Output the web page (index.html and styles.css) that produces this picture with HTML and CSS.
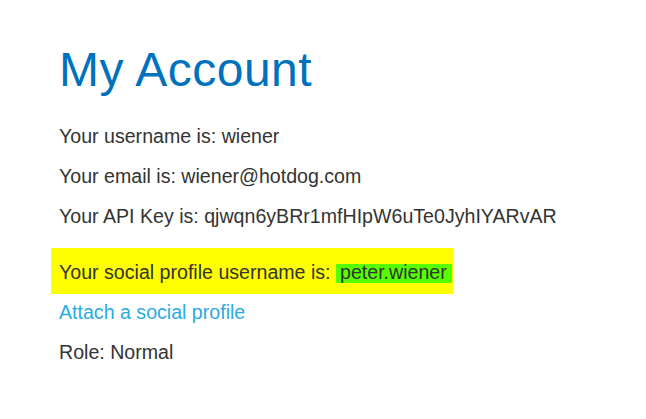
FILE: index.html
```html
<!DOCTYPE html>
<html>
<head>
<meta charset="utf-8">
<link rel="stylesheet" href="styles.css">
</head>
<body>
<div class="container">
  <h1 class="title">My Account</h1>
  <div class="account">
    <p class="line">Your username is: wiener</p>
    <p class="line">Your email is: wiener@hotdog.com</p>
    <p class="line">Your API Key is: qjwqn6yBRr1mfHIpW6uTe0JyhIYARvAR</p>
    <div class="social">
      <p class="line">Your social profile username is: <span class="badge">peter.wiener</span></p>
    </div>
    <p class="line link-line"><a class="link" href="#">Attach a social profile</a></p>
    <p class="line">Role: Normal</p>
  </div>
</div>
</body>
</html>
```
FILE: styles.css
```css
html, body {
  margin: 0;
  padding: 0;
  background: #ffffff;
}
body {
  font-family: "Liberation Sans", Arial, sans-serif;
  color: #333332;
  font-size: 19.6px;
}
.container {
  padding: 42px 59px;
}
.title {
  margin: 0 0 27px 0;
  font-size: 48px;
  letter-spacing: 0.5px;
  font-weight: normal;
  color: #0071bc;
  line-height: 56px;
}
.account {
  display: flex;
  flex-direction: column;
  align-items: flex-start;
  gap: 17px;
}
.line {
  margin: 0;
  line-height: 23px;
  white-space: nowrap;
}
.social {
  background: #ffff00;
  margin: 3px 0 0 -8px;
  padding: 13px 1px 10px 8px;
}
.badge {
  display: inline-block;
  background: #55ff00;
  line-height: 17px;
  padding: 0 5px 2px 4px;
}
.link-line {
  margin-top: -10px;
}
.link {
  color: #29abe2;
  text-decoration: none;
}
```
